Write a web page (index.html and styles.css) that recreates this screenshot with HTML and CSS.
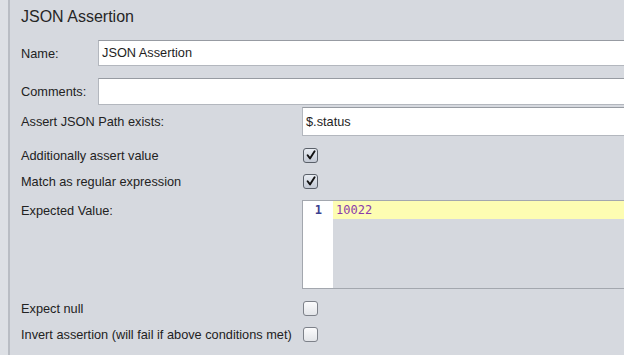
FILE: index.html
```html
<!DOCTYPE html>
<html>
<head>
<meta charset="utf-8">
<link rel="stylesheet" href="styles.css">
</head>
<body>
<div class="frame">
  <div class="strip"></div>
  <div class="panel">
    <h1 class="title">JSON Assertion</h1>
    <div class="meta">
      <label class="lbl">Name:</label>
      <div class="field">JSON Assertion</div>
      <label class="lbl">Comments:</label>
      <div class="field tall"></div>
    </div>
    <div class="form">
      <label class="lbl">Assert JSON Path exists:</label>
      <div class="field path">$.status</div>

      <label class="lbl">Additionally assert value</label>
      <div class="cell"><span class="cb on"><svg viewBox="0 0 14 14" width="14" height="14"><path d="M3.6 7.2 L6 10.4 L10.6 3.2" fill="none" stroke="#111" stroke-width="1.9" stroke-linecap="round" stroke-linejoin="round"/></svg></span></div>

      <label class="lbl">Match as regular expression</label>
      <div class="cell"><span class="cb on"><svg viewBox="0 0 14 14" width="14" height="14"><path d="M3.6 7.2 L6 10.4 L10.6 3.2" fill="none" stroke="#111" stroke-width="1.9" stroke-linecap="round" stroke-linejoin="round"/></svg></span></div>

      <label class="lbl top">Expected Value:</label>
      <div class="editor">
        <div class="gutter"><span class="ln">1</span></div>
        <div class="code"><div class="line">10022</div></div>
      </div>

      <label class="lbl">Expect null</label>
      <div class="cell"><span class="cb"></span></div>

      <label class="lbl">Invert assertion (will fail if above conditions met)</label>
      <div class="cell"><span class="cb"></span></div>
    </div>
  </div>
</div>
</body>
</html>
```
FILE: styles.css
```css
html, body {
  margin: 0;
  padding: 0;
  background: #d6d9df;
  overflow: hidden;
}
body {
  font-family: "Liberation Sans", Arial, sans-serif;
  font-size: 12.75px;
  color: #222;
}
.frame {
  display: flex;
  height: 355px;
  width: 640px;
}
.strip {
  width: 8px;
  flex: none;
  background: #dde0e5;
  border-right: 2px solid #b9bdc4;
}
.panel {
  flex: 1;
  padding: 7px 0 0 11px;
}
.title {
  margin: 0 0 13px 0;
  font-size: 16px;
  font-weight: normal;
  line-height: 20px;
  color: #262626;
}
.meta {
  display: grid;
  grid-template-columns: 77px 1fr;
  row-gap: 12px;
  align-items: center;
  margin-bottom: 2px;
}
.lbl {
  line-height: 15px;
  white-space: nowrap;
}
.lbl.top {
  align-self: start;
  padding-top: 3px;
}
.field {
  background: #fff;
  border: 1px solid #b3b7be;
  border-top-color: #979ba2;
  border-right: none;
  height: 24px;
  line-height: 24px;
  padding-left: 3px;
  color: #1e1e1e;
}
.field.tall {
  height: 25px;
}
.form {
  display: grid;
  grid-template-columns: 281px 1fr;
  grid-template-rows: 29px 14px 14px 89px 14px 14px;
  row-gap: 12px;
  align-items: center;
}
.field.path {
  height: 27px;
  line-height: 27px;
}
.cell {
  display: flex;
  align-items: center;
  height: 14px;
}
.cb {
  box-sizing: border-box;
  width: 15px;
  height: 15px;
  margin-left: 1px;
  border: 1px solid #7d8189;
  border-radius: 3px;
  background: linear-gradient(#fbfbfc, #e3e5e9);
  display: flex;
  align-items: center;
  justify-content: center;
}
.cb.on {
  border-color: #5a6069;
  background: linear-gradient(#e9edf3, #c3c9d4);
}
.cb svg {
  display: block;
  margin: -1px;
}
.editor {
  height: 89px;
  box-sizing: border-box;
  border: 1px solid #a3a7ae;
  border-right: none;
  display: flex;
  align-self: stretch;
}
.gutter {
  width: 30px;
  flex: none;
  background: #fff;
  text-align: right;
  box-sizing: border-box;
  padding-right: 11px;
}
.ln {
  display: block;
  line-height: 18px;
  font-family: "DejaVu Sans Mono", monospace;
  font-size: 12px;
  font-weight: bold;
  color: #3b3f8f;
}
.code {
  flex: 1;
  background: #d5d8de;
}
.line {
  background: #fdfdb2;
  height: 18px;
  line-height: 18px;
  padding-left: 3px;
  font-family: "DejaVu Sans Mono", monospace;
  font-size: 12px;
  color: #8a3cab;
}
```
